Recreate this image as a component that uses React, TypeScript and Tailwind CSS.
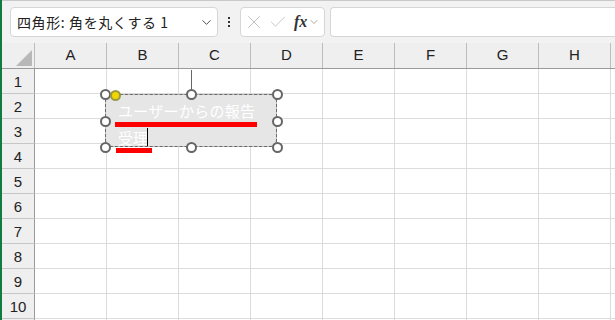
import { ChevronDown, X, Check } from "lucide-react";

const cols = ["A", "B", "C", "D", "E", "F", "G", "H", "I"];
const rows = [1, 2, 3, 4, 5, 6, 7, 8, 9, 10, 11];

// selection handles of the rounded rectangle, relative to the shape box
const handles: [number, number][] = [
  [0, 0],
  [86, 0],
  [172, 0],
  [0, 27],
  [172, 27],
  [0, 53],
  [86, 53],
  [172, 53],
];

function Handle({ x, y, yellow = false }: { x: number; y: number; yellow?: boolean }) {
  return (
    <span
      className={`absolute h-[11px] w-[11px] rounded-full border-2 ${
        yellow ? "border-[#9a9a40] bg-[#f2d600]" : "border-[#666] bg-white"
      }`}
      style={{ left: x - 5.5, top: y - 5.5 }}
    />
  );
}

export default function App() {
  return (
    <div
      className="relative h-[320px] w-[615px] overflow-hidden border-l-2 border-[#107c41] bg-white text-[#222]"
      style={{ fontFamily: '"Noto Sans CJK JP", "Noto Sans", sans-serif' }}
    >
      {/* formula bar */}
      <div className="flex h-[43px] items-center border-t border-[#c9c9c9] bg-[#f2f2f2] pl-[8px]">
        <div className="flex h-[30px] w-[208px] items-center justify-between rounded-[4px] border border-[#d6d6d6] bg-white pl-[6px] pr-[3px]">
          <span className="text-[14px] leading-none tracking-[0.6px]">四角形: 角を丸くする 1</span>
          <ChevronDown size={15} strokeWidth={1.5} className="text-[#444]" />
        </div>
        <div className="flex w-[22px] flex-col items-center gap-[2px]">
          <span className="h-[2px] w-[2px] bg-[#333]" />
          <span className="h-[2px] w-[2px] bg-[#333]" />
          <span className="h-[2px] w-[2px] bg-[#333]" />
        </div>
        <div className="flex h-[30px] w-[85px] items-center rounded-[4px] border border-[#d6d6d6] bg-white pl-[2px]">
          <X size={22} strokeWidth={1} className="text-[#bcbcbc]" />
          <Check size={20} strokeWidth={1} className="ml-[3px] text-[#bcbcbc]" />
          <span
            className="ml-[6px] text-[16px] font-bold italic leading-none text-[#333]"
            style={{ fontFamily: '"Liberation Serif", serif' }}
          >
            fx
          </span>
          <ChevronDown size={12} strokeWidth={1.5} className="ml-[1px] text-[#888]" />
        </div>
        <div className="ml-[5px] h-[30px] flex-1 rounded-l-[4px] border border-r-0 border-[#d6d6d6] bg-white" />
      </div>

      {/* column headers */}
      <div className="flex h-[26px] border-b border-[#9a9a9a] bg-[#efefef]">
        <div className="relative w-[33px] shrink-0 border-r border-[#bdbdbd]">
          <span className="absolute bottom-[2px] right-[2px] h-0 w-0 border-b-[16px] border-l-[16px] border-b-[#b8b8b8] border-l-transparent" />
        </div>
        {cols.map((c) => (
          <div
            key={c}
            className="flex w-[72px] shrink-0 items-center justify-center border-r border-[#bdbdbd] text-[15px]"
            style={{ fontFamily: '"Liberation Sans", sans-serif' }}
          >
            {c}
          </div>
        ))}
      </div>

      {/* grid */}
      {rows.map((r) => (
        <div key={r} className="flex h-[25px]">
          <div
            className="flex w-[33px] shrink-0 items-center justify-center border-b border-r border-[#c6c6c6] border-r-[#9a9a9a] bg-[#efefef] text-[15px] leading-none"
            style={{ fontFamily: '"Liberation Sans", sans-serif' }}
          >
            {r}
          </div>
          {cols.map((c) => (
            <div key={c} className="w-[72px] shrink-0 border-b border-r border-[#dcdcdc]" />
          ))}
        </div>
      ))}

      {/* rotation stem */}
      <span className="absolute left-[189px] top-[70px] h-[24px] w-px bg-[#666]" />

      {/* shape */}
      <div className="absolute left-[103px] top-[94px] h-[53px] w-[172px]">
        <div className="absolute inset-0 rounded-[8px] border border-[#bcbcbc] bg-[#e6e6e6]" />
        <div className="absolute inset-0 border border-dashed border-[#6a6a6a]" />
        <div className="absolute left-[13px] top-[7px] text-[15px] leading-[20px] tracking-[0.3px] text-white">
          ユーザーからの報告
        </div>
        <span className="absolute left-[10px] top-[28px] h-[5px] w-[142px] bg-[#ff0000]" />
        <div className="absolute left-[13px] top-[34px] text-[15px] leading-[20px] text-white">受理</div>
        <span className="absolute left-[42px] top-[34px] h-[18px] w-px bg-black" />
        <span className="absolute left-[11px] top-[54px] h-[5px] w-[36px] bg-[#ff0000]" />
        {handles.map(([x, y]) => (
          <Handle key={`${x}-${y}`} x={x} y={y} />
        ))}
        <Handle x={10} y={1} yellow />
      </div>
    </div>
  );
}
